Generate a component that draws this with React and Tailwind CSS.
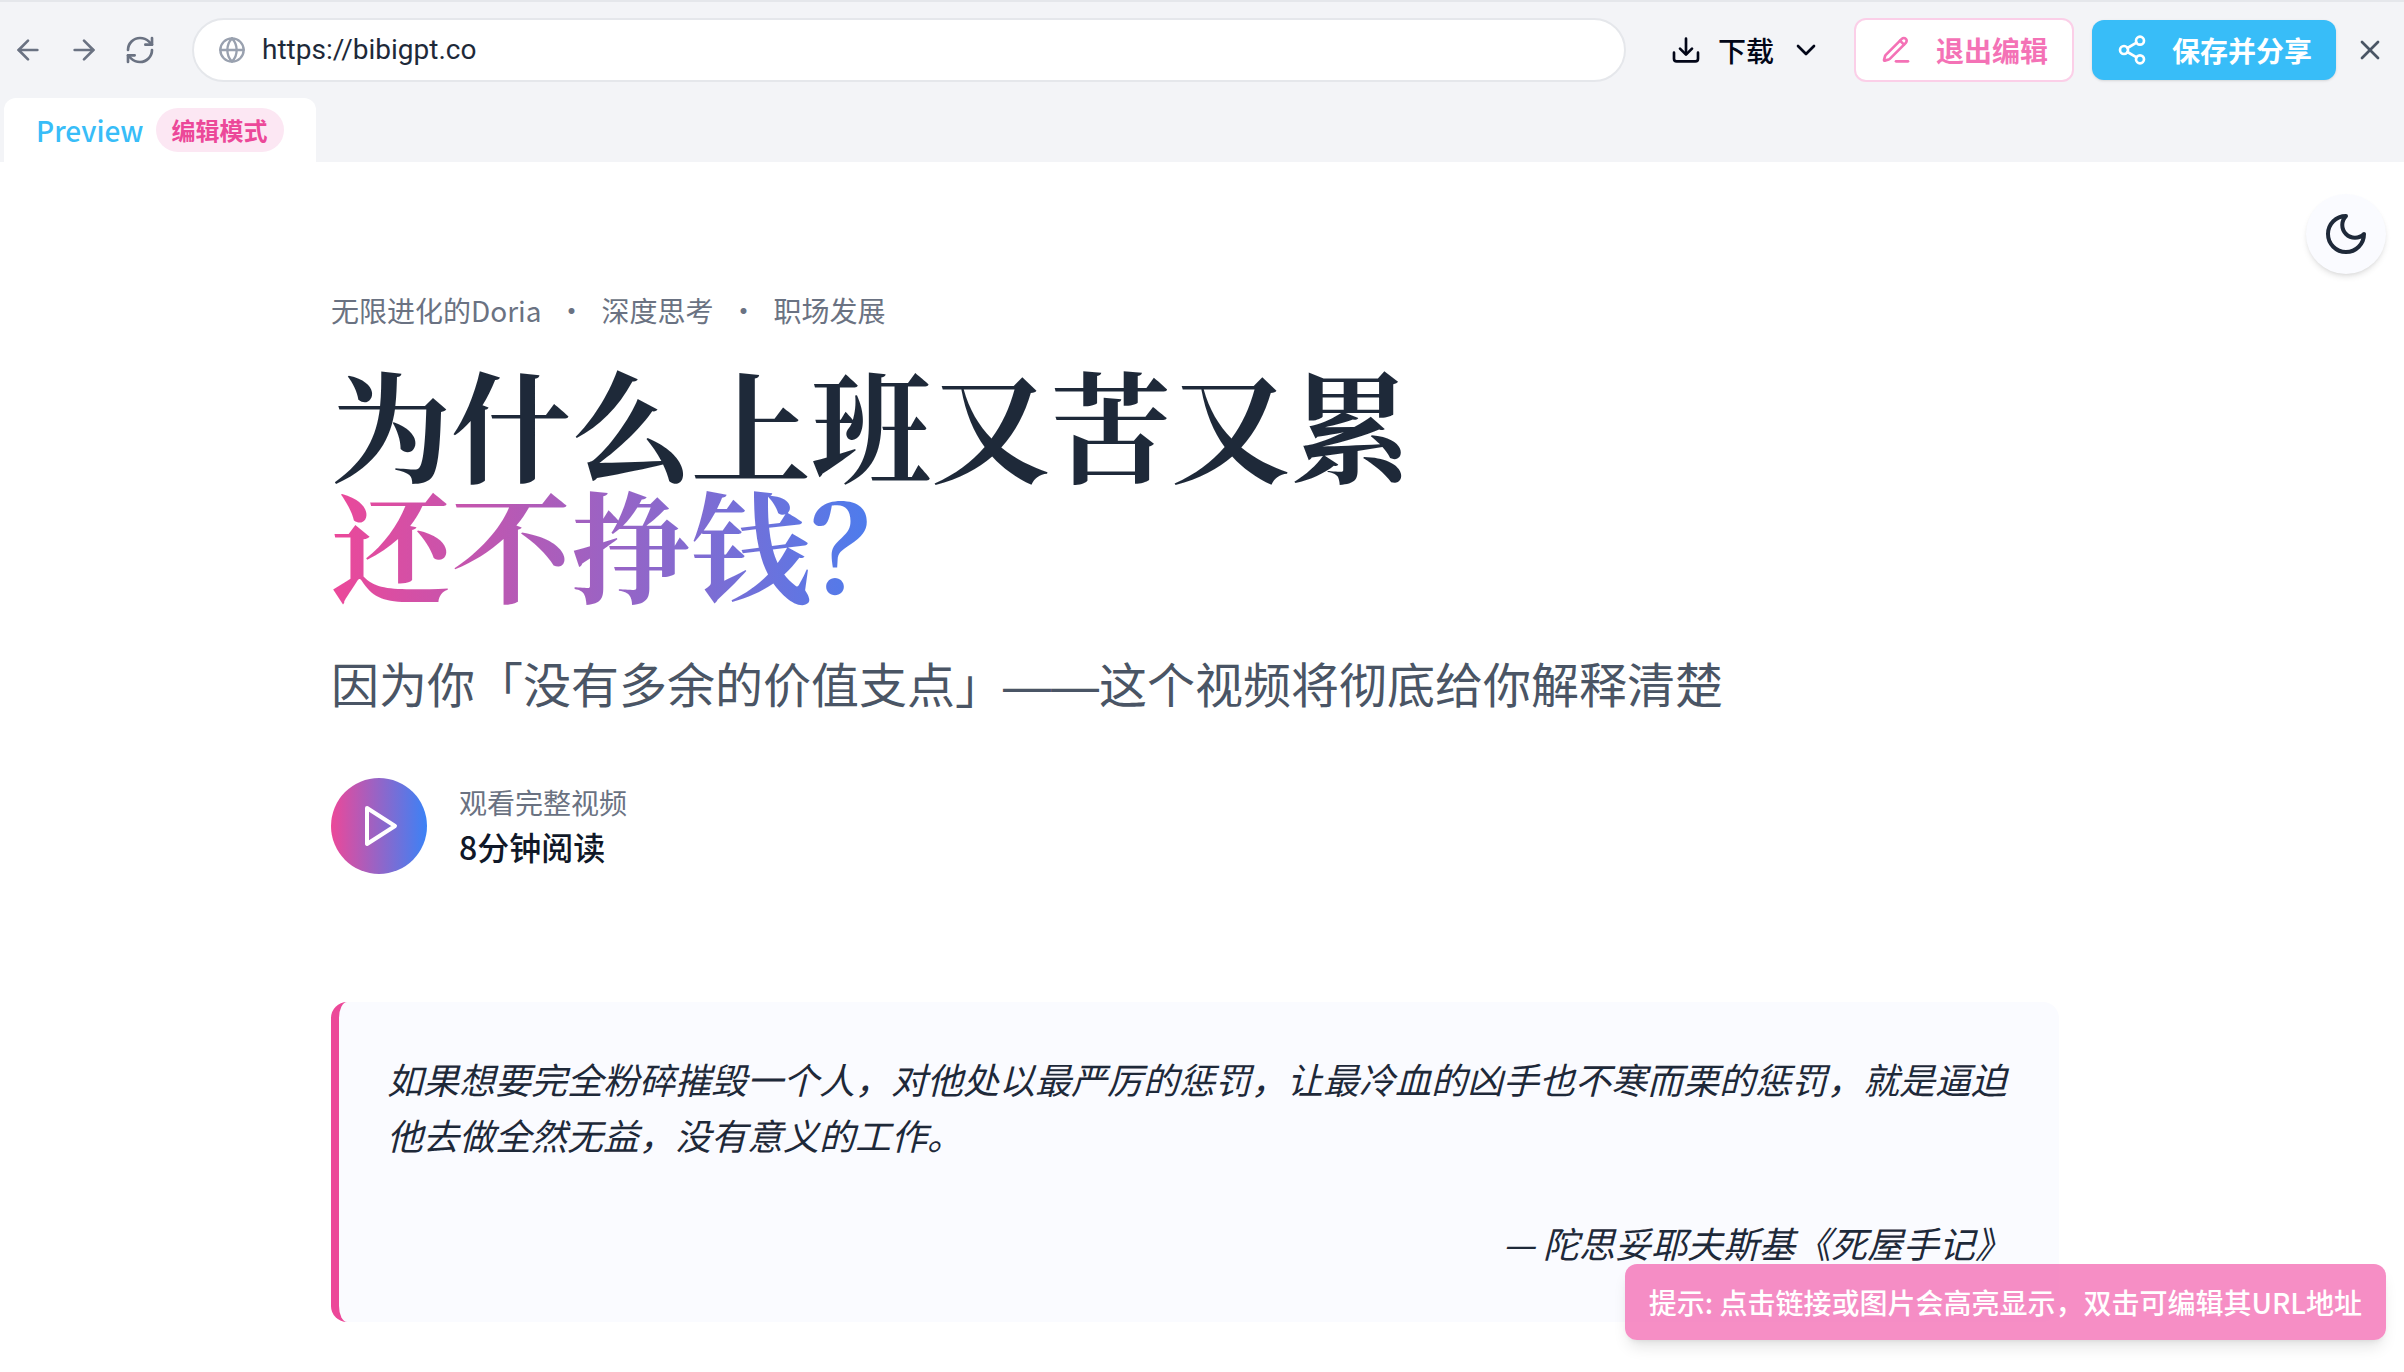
import { useState } from 'react';
import { ArrowLeft, ArrowRight, ChevronDown, Globe, RefreshCw, X } from 'lucide-react';

const TAGS = ['无限进化的Doria', '深度思考', '职场发展'];

function Icon({ size = 32, children }) {
  return (
    <svg
      width={size}
      height={size}
      viewBox="0 0 24 24"
      fill="none"
      stroke="currentColor"
      strokeWidth={2}
      strokeLinecap="round"
      strokeLinejoin="round"
      className="shrink-0"
      aria-hidden="true"
    >
      {children}
    </svg>
  );
}

function DownloadIcon() {
  return (
    <Icon>
      <path d="M12 3.500v11.500" />
      <path d="m7.500 11 4.500 4.500 4.500-4.500" />
      <path d="M3 14v4.500a2 2 0 0 0 2 2h14a2 2 0 0 0 2-2V14" />
    </Icon>
  );
}

function PencilIcon() {
  return (
    <Icon>
      <path d="M12 20.500h9" />
      <path d="M16.376 3.622a1 1 0 0 1 3.002 3.002L7.368 18.635a2 2 0 0 1-.855.506l-2.872.838a.5.5 0 0 1-.62-.62l.838-2.872a2 2 0 0 1 .506-.854z" />
      <path d="m15 5 3 3" />
    </Icon>
  );
}

function ShareIcon() {
  return (
    <Icon>
      <circle cx="18" cy="5" r="3" />
      <circle cx="6" cy="12" r="3" />
      <circle cx="18" cy="19" r="3" />
      <path d="m8.590 13.510 6.830 3.980" />
      <path d="m15.410 6.510-6.820 3.980" />
    </Icon>
  );
}

function Toolbar({ editing, onToggleEdit }) {
  const [url, setUrl] = useState('https://bibigpt.co');

  return (
    <div className="flex items-center py-4 pr-[18px] pl-3">
      <nav className="flex items-center gap-6 text-gray-500">
        <button type="button" aria-label="后退">
          <ArrowLeft size={32} />
        </button>
        <button type="button" aria-label="前进">
          <ArrowRight size={32} />
        </button>
        <button type="button" aria-label="刷新">
          <RefreshCw size={32} />
        </button>
      </nav>
      <label className="ml-9 flex h-16 flex-1 items-center gap-4 rounded-full border-2 border-gray-200 bg-white px-6 text-gray-400">
        <Globe size={28} />
        <input
          type="text"
          value={url}
          onChange={(e) => setUrl(e.target.value)}
          aria-label="网址"
          className="min-w-0 flex-1 bg-transparent font-['Roboto','Noto_Sans_CJK_SC',sans-serif] text-[28px] text-gray-800 outline-none"
        />
      </label>
      <button type="button" className="ml-11 flex items-center gap-4 text-[28px] font-medium text-slate-950">
        <DownloadIcon />
        下载
        <ChevronDown size={32} />
      </button>
      <button
        type="button"
        onClick={onToggleEdit}
        className="ml-8 flex h-16 items-center gap-6 rounded-xl border-2 border-[#fbcfe8] bg-white px-6 text-[28px] font-bold text-[#f472b6]"
      >
        <PencilIcon />
        {editing ? '退出编辑' : '进入编辑'}
      </button>
      <button
        type="button"
        className="ml-[18px] flex h-[60px] items-center gap-6 rounded-xl bg-[#38bdf8] px-6 text-[28px] font-bold text-white shadow-sm"
      >
        <ShareIcon />
        保存并分享
      </button>
      <button type="button" aria-label="关闭" className="ml-[18px] text-gray-600">
        <X size={32} />
      </button>
    </div>
  );
}

function Tabs({ editing }) {
  return (
    <div className="flex px-1">
      <button
        type="button"
        className="flex h-16 items-center gap-3 rounded-t-xl bg-white px-8 text-[28px] font-medium text-[#38bdf8]"
      >
        Preview
        {editing && (
          <span className="rounded-full bg-[#fce7f3] px-4 py-1 text-2xl leading-9 font-bold text-[#ec4899]">编辑模式</span>
        )}
      </button>
    </div>
  );
}

function Hero() {
  return (
    <header>
      <ul className="flex items-center gap-4 text-[28px] leading-10 text-gray-500">
        {TAGS.map((tag, i) => (
          <li key={tag} className="flex items-center gap-4">
            {i > 0 && <span>•</span>}
            {tag}
          </li>
        ))}
      </ul>
      <h1 className="mt-8 font-['Noto_Serif_CJK_SC','Noto_Serif_SC','Noto_Sans_CJK_SC',serif] text-[120px] leading-[120px] font-bold text-gray-800">
        为什么上班又苦又累
        <br />
        <span className="bg-[linear-gradient(to_right,#ec4899,#3b82f6)] bg-clip-text text-transparent">还不挣钱？</span>
      </h1>
      <p className="mt-12 text-5xl leading-[64px] text-gray-600">
        因为你「没有多余的价值支点」
        {/* the CJK face draws the dash narrower than one em */}
        <span className="font-['Liberation_Sans',sans-serif] leading-none">——</span>
        这个视频将彻底给你解释清楚
      </p>
      <div className="mt-16 flex items-center gap-8">
        <button
          type="button"
          aria-label="播放"
          className="flex size-24 items-center justify-center rounded-full bg-[linear-gradient(to_right,#ec4899,#3b82f6)] text-white"
        >
          <Icon size={48}>
            <path d="m6 3 14 9-14 9z" />
          </Icon>
        </button>
        <div>
          <p className="text-[28px] leading-10 text-gray-500">观看完整视频</p>
          <p className="text-[32px] leading-[48px] font-medium text-gray-900">8分钟阅读</p>
        </div>
      </div>
    </header>
  );
}

function Quote() {
  return (
    <blockquote className="mt-32 rounded-2xl border-l-8 border-[#ec4899] bg-[#fafbff] px-12 pt-12 pb-13 text-4xl leading-[56px] text-gray-800 italic">
      <p>
        如果想要完全粉碎摧毁一个人，对他处以最严厉的惩罚，让最冷血的凶手也不寒而栗的惩罚，就是逼迫他去做全然无益，没有意义的工作。
      </p>
      <footer className="mt-13 text-right">— 陀思妥耶夫斯基《死屋手记》</footer>
    </blockquote>
  );
}

export default function App() {
  const [editing, setEditing] = useState(true);

  return (
    <div className="flex h-screen flex-col overflow-hidden bg-white font-['Noto_Sans_CJK_SC',sans-serif]">
      <div className="shrink-0 border-t-2 border-gray-200 bg-[#f3f4f7]">
        <Toolbar editing={editing} onToggleEdit={() => setEditing(!editing)} />
        <Tabs editing={editing} />
      </div>

      <main className="relative min-h-0 flex-1 pr-3.5">
        <div className="mx-auto max-w-[1792px] px-8 pt-32">
          <Hero />
          <Quote />
        </div>

        <button
          type="button"
          aria-label="切换深色模式"
          className="absolute top-8 right-[18px] flex size-20 items-center justify-center rounded-full bg-[#fafbff] text-gray-800 shadow-md"
        >
          <Icon size={48}>
            <path d="M12 3a6 6 0 0 0 9 9 9 9 0 1 1-9-9Z" />
          </Icon>
        </button>

        {editing && (
          <div
            role="status"
            className="absolute right-[18px] bottom-8 rounded-xl bg-[#f472b6]/80 px-6 py-4 text-[28px] leading-[44px] font-medium text-white shadow-lg"
          >
            提示: 点击链接或图片会高亮显示，双击可编辑其URL地址
          </div>
        )}
      </main>
    </div>
  );
}
